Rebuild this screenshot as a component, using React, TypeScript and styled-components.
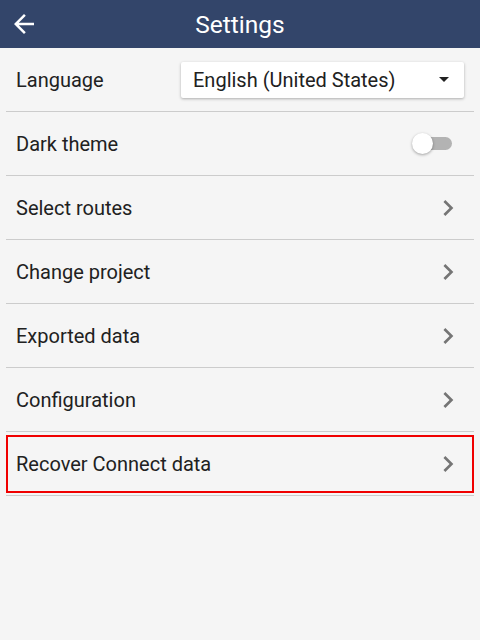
import styled, {createGlobalStyle} from 'styled-components';

const GlobalStyle = createGlobalStyle`
	html, body {
		margin: 0;
		padding: 0;
		background: #f5f5f5;
		font-family: Roboto, 'Noto Sans', sans-serif;
	}
`;

const items = [
	'Select routes',
	'Change project',
	'Exported data',
	'Configuration',
	'Recover Connect data',
];

const ChevronRight = () => (
	<svg width="32" height="32" viewBox="0 0 24 24">
		<path fill="#757575" d="M10 6L8.59 7.41 13.17 12l-4.58 4.59L10 18l6-6z" />
	</svg>
);

const ArrowBack = () => (
	<svg width="30" height="30" viewBox="0 0 24 24">
		<path
			fill="#fff"
			d="M20 11H7.83l5.59-5.59L12 4l-8 8 8 8 1.41-1.41L7.83 13H20v-2z"
		/>
	</svg>
);

const App = () => (
	<Page>
		<GlobalStyle />
		<Header>
			<BackButton aria-label="Back">
				<ArrowBack />
			</BackButton>
			<Title>Settings</Title>
		</Header>
		<List>
			<Row>
				<Label>Language</Label>
				<Select>
					<span>English (United States)</span>
					<Caret />
				</Select>
			</Row>
			<Row>
				<Label>Dark theme</Label>
				<Switch>
					<Track />
					<Thumb />
				</Switch>
			</Row>
			{items.map((label, i) => (
				<Row key={label} $focused={i === items.length - 1}>
					<Label>{label}</Label>
					<ChevronRight />
				</Row>
			))}
		</List>
	</Page>
);

export default App;

const Page = styled('div')`
	width: 480px;
	min-height: 640px;
	background: #f5f5f5;
`;

const Header = styled('header')`
	position: relative;
	height: 48px;
	background: #33456a;
	display: flex;
	align-items: center;
	justify-content: center;
`;

const BackButton = styled('button')`
	position: absolute;
	left: 9px;
	top: 9px;
	width: 30px;
	height: 30px;
	padding: 0;
	border: 0;
	background: none;
	display: flex;
`;

const Title = styled('h1')`
	margin: 1px 0 0;
	color: #fff;
	font-size: 24.5px;
	font-weight: 400;
`;

const List = styled('div')`
	margin: 0 6px;
	display: flex;
	flex-direction: column;
`;

const Row = styled('div')<{$focused?: boolean}>`
	position: relative;
	height: 63px;
	border-bottom: 1px solid #cccccc;
	display: flex;
	align-items: center;
	justify-content: space-between;
	padding: 0 10px;

	${p =>
		p.$focused &&
		`
		&::after {
			content: '';
			position: absolute;
			left: 0;
			right: 0;
			top: 3px;
			bottom: 2px;
			border: 2px solid #f00000;
		}
	`}
`;

const Label = styled('span')`
	font-size: 20px;
	color: #212121;
`;

const Select = styled('div')`
	width: 283px;
	height: 36px;
	box-sizing: border-box;
	padding: 0 15px 0 12px;
	background: #fff;
	border-radius: 2px;
	box-shadow: 0 1px 3px rgba(0, 0, 0, 0.3);
	display: flex;
	align-items: center;
	justify-content: space-between;
	font-size: 20px;
	color: #212121;
`;

const Caret = styled('span')`
	width: 0;
	height: 0;
	border-left: 5px solid transparent;
	border-right: 5px solid transparent;
	border-top: 5px solid #212121;
`;

const Switch = styled('div')`
	position: relative;
	width: 40px;
	height: 21px;
	margin-right: 12px;
`;

const Track = styled('div')`
	position: absolute;
	left: 3px;
	right: 0;
	top: 4px;
	height: 13px;
	border-radius: 7px;
	background: #b3b3b3;
`;

const Thumb = styled('div')`
	position: absolute;
	left: 0;
	top: 0;
	width: 21px;
	height: 21px;
	border-radius: 50%;
	background: #fff;
	box-shadow: 0 1px 3px rgba(0, 0, 0, 0.35);
`;
